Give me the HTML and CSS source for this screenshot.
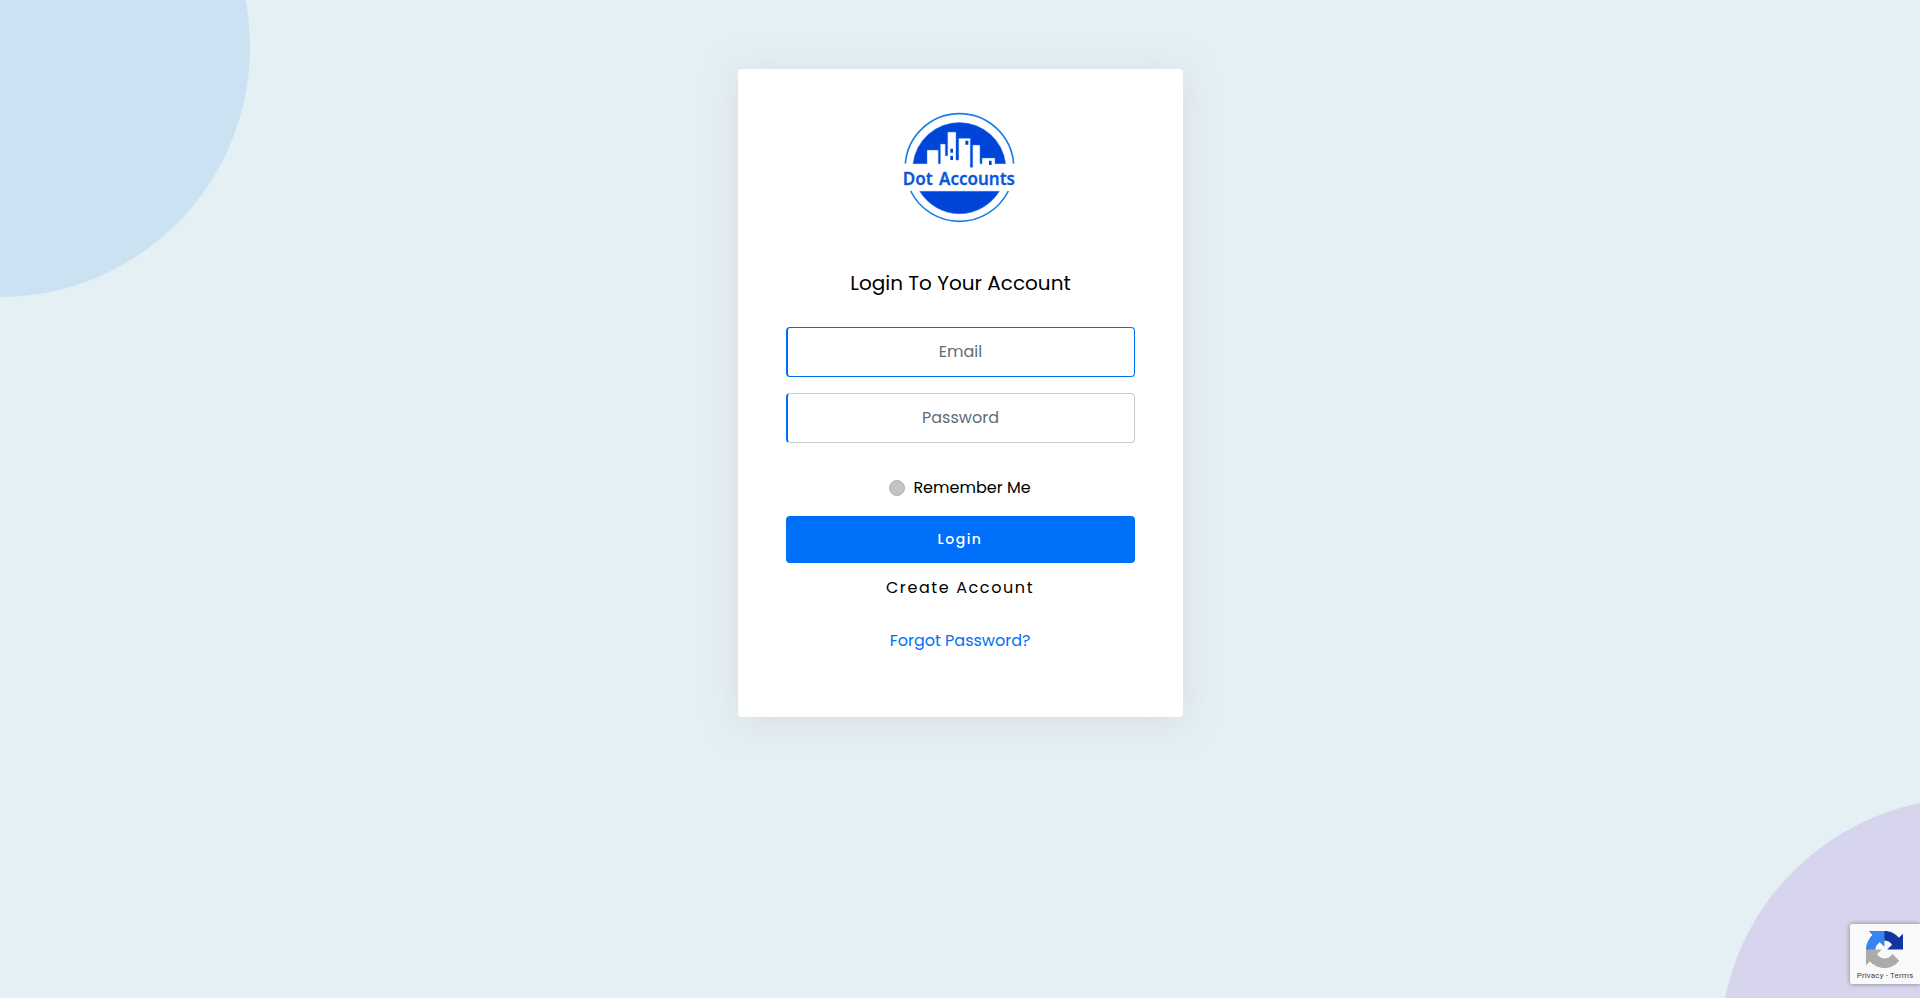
FILE: index.html
```
<!DOCTYPE html>
<html lang="en">
<head>
<meta charset="utf-8">
<title>Dot Accounts - Login</title>
<link rel="stylesheet" href="styles.css">
</head>
<body>
<main class="page">
  <div class="blob blob-blue"></div>
  <div class="blob blob-purple"></div>
  <form class="card">
    <svg class="logo" viewBox="0 0 420 408" role="img" aria-label="Dot Accounts">
      <g fill="none" stroke="#1b7ee8" stroke-width="5">
        <path d="M46 191A163 163 0 0 1 371 191"/>
        <path d="M62 273A163.500 163.500 0 0 0 355 273"/>
      </g>
      <path fill="#0045d8" stroke="#2b7de6" stroke-width="1.5" d="M69 191A140 140 0 0 1 347 191H315V174H276V191H270V135H248V202H241V115H206V180H198V96H173V167H166V132H151V191H145V150H111V191Z"/>
      <path fill="#0045d8" stroke="#2b7de6" stroke-width="1.5" d="M89 274H328A140 140 0 0 1 89 274Z"/>
      <path fill="#0045d8" d="M181 146h8v12h-8zM181 168h8v12h-8zM226 122h9v12h-9zM297 182h8v13h-8z"/>
      <text class="logo-text" x="38" y="256" textLength="90" lengthAdjust="spacingAndGlyphs">Dot</text>
      <text class="logo-text" x="147" y="256" textLength="228" lengthAdjust="spacingAndGlyphs">Accounts</text>
    </svg>
    <h1 class="title">Login To Your Account</h1>
    <input class="field field-active" type="text" placeholder="Email">
    <input class="field field-password" type="password" placeholder="Password">
    <label class="remember"><span class="check"></span><span class="remember-text">Remember Me</span></label>
    <button class="login" type="button">Login</button>
    <a class="create">Create Account</a>
    <a class="forgot">Forgot Password?</a>
  </form>
  <aside class="captcha">
    <svg class="captcha-logo" viewBox="0 0 64 64">
      <path fill="#1235a1" d="M64 31.955l-.033-1.37V4.687l-7.16 7.16C50.948 4.674 42.033.093 32.05.093c-10.4 0-19.622 4.96-25.458 12.64l11.736 11.86a15.55 15.55 0 0 1 4.754-5.334c2.05-1.6 4.952-2.906 8.968-2.906.485 0 .86.057 1.135.163 4.976.393 9.288 3.14 11.828 7.124l-8.307 8.307L64 31.953"/>
      <path fill="#3684f0" d="M31.862.094l-1.37.033H4.594l7.16 7.16C4.58 13.147 0 22.06 0 32.046c0 10.4 4.96 19.622 12.64 25.458L24.5 45.768a15.55 15.55 0 0 1-5.334-4.754c-1.6-2.05-2.906-4.952-2.906-8.968 0-.485.057-.86.163-1.135.393-4.976 3.14-9.288 7.124-11.828l8.307 8.307L31.86.095"/>
      <path fill="#ababab" d="M.001 32.045l.033 1.37v25.898l7.16-7.16c5.86 7.173 14.774 11.754 24.76 11.754 10.4 0 19.622-4.96 25.458-12.64l-11.736-11.86a15.55 15.55 0 0 1-4.754 5.334c-2.05 1.6-4.952 2.906-8.968 2.906-.485 0-.86-.057-1.135-.163-4.976-.393-9.288-3.14-11.828-7.124l8.307-8.307c-10.522.04-22.4.066-27.295-.005"/>
    </svg>
    <span class="captcha-text">Privacy - Terms</span>
  </aside>
</main>
</body>
</html>
```
FILE: styles.css
```
* { box-sizing: border-box; }
body {
  margin: 0;
  font-family: Poppins, Inter, "Open Sans", sans-serif;
  font-size: 16px;
  color: #000;
}
.page {
  position: relative;
  height: 998px;
  overflow: hidden;
  background: #e4f0f4;
  padding-top: 69px;
}
.blob {
  position: absolute;
  width: 500px;
  height: 500px;
  border-radius: 50%;
}
.blob-blue { left: -250px; top: -203px; background: #cbe2f2; }
.blob-purple { right: -300px; bottom: -300px; background: #d7d5ee; }
.card {
  position: relative;
  display: flex;
  flex-direction: column;
  align-items: center;
  width: 445px;
  height: 648px;
  margin: 0 auto 0 738px;
  padding: 31px 48px 0;
  background: #fff;
  border-radius: 4px;
  box-shadow: 0 4px 30px rgba(208, 204, 204, 0.5);
}
.logo { display: block; width: 140px; height: 136px; margin-right: 1px; }
.logo-text {
  font-family: "Noto Sans", sans-serif;
  font-size: 52px;
  font-weight: 600;
  fill: #0b57dc;
  stroke: #0b57dc;
  stroke-width: 0.8;
}
.title {
  margin: 32px 0 0;
  height: 59px;
  font-size: 20px;
  line-height: 30px;
  font-weight: 400;
  white-space: nowrap;
}
.field {
  width: 349px;
  height: 50px;
  padding: 0 11px 2px 10px;
  border: 1px solid #c5ccd3;
  border-left: 2px solid #0070fa;
  border-radius: 4px;
  background: #fff;
  font: inherit;
  text-align: center;
  outline: none;
}
.field::placeholder { color: #636c75; opacity: 1; }
.field-active { border-color: #0070fa; }
.field-password { margin-top: 16px; }
.remember {
  display: flex;
  align-items: center;
  gap: 8.5px;
  height: 24px;
  margin: 33px 1.5px 0 0;
}
.remember-text { padding-bottom: 2px; }
.check {
  width: 16px;
  height: 16px;
  border: 1px solid #a9b3bc;
  border-radius: 50%;
  background: #c4c4c4;
}
.login {
  width: 349px;
  height: 47px;
  margin-top: 16px;
  padding: 0 1px 0 0;
  border: 0;
  border-radius: 4px;
  background: #0070fa;
  color: #fff;
  font: inherit;
  font-size: 14px;
  font-weight: 500;
  letter-spacing: 1.5px;
}
.create {
  margin: 13px 1px 0 0;
  line-height: 24px;
  letter-spacing: 1.6px;
}
.forgot {
  margin: 29px 1px 0 0;
  line-height: 24px;
  color: #0070fa;
}
.captcha {
  position: absolute;
  right: 0;
  bottom: 14px;
  width: 70px;
  height: 60px;
  display: flex;
  flex-direction: column;
  align-items: center;
  padding-top: 7px;
  border-radius: 2px 0 0 2px;
  background: #f9f9f9;
  box-shadow: 0 0 5px #808080;
}
.captcha-logo { width: 37px; height: 37px; margin-right: 1px; }
.captcha-text {
  margin-top: 3px;
  font: 8px/10px Roboto, sans-serif;
  letter-spacing: 0.15px;
  color: #444;
}
```
